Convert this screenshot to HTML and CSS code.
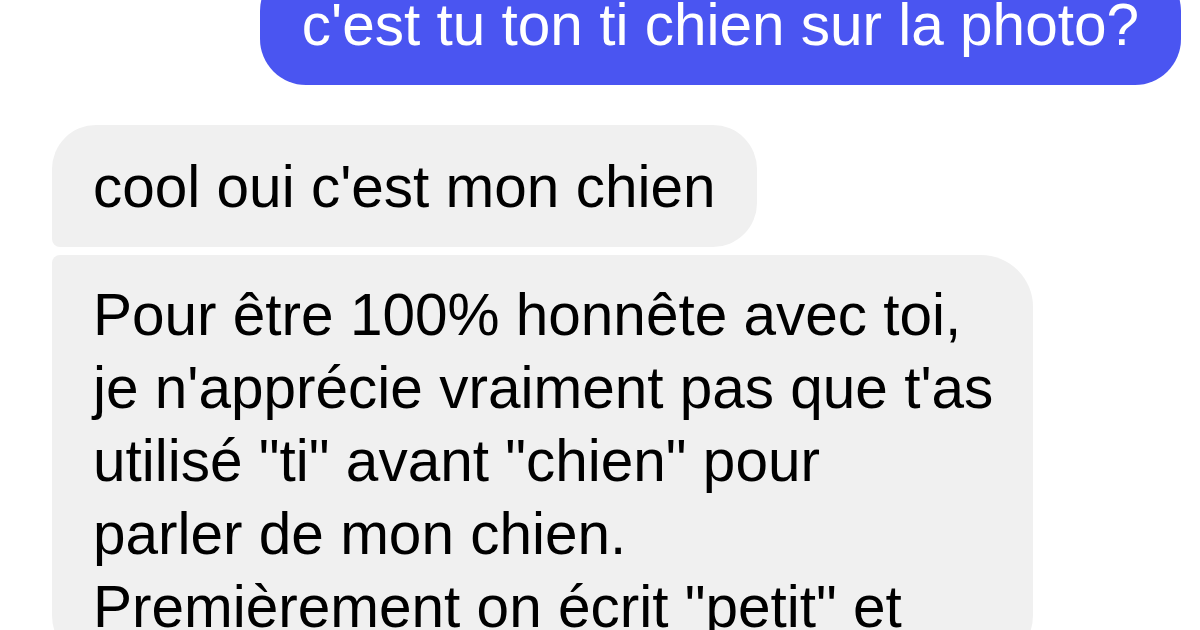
FILE: index.html
```html
<!DOCTYPE html>
<html lang="fr">
<head>
    <meta charset="UTF-8">
    <meta name="viewport" content="width=device-width, initial-scale=1.0">
    <title>Conversation</title>
    <link rel="stylesheet" href="styles.css">
</head>
<body>

<div class="thread">
    <div class="bubble sent">c'est tu ton ti chien sur la photo?</div>

    <div class="group">
        <div class="bubble received first">cool oui c'est mon chien</div>
        <div class="bubble received last long">
            Pour être 100% honnête avec toi,<br>
            je n'apprécie vraiment pas que t'as<br>
            utilisé "ti" avant "chien" pour<br>
            parler de mon chien.<br>
            Premièrement on écrit "petit" et
        </div>
    </div>
</div>

</body>
</html>
```

FILE: styles.css
```css
* {
    box-sizing: border-box;
    margin: 0;
    padding: 0;
}

body, html {
    height: 100%;
    overflow: hidden;
    background: #fff;
    font-family: "Liberation Sans", Arial, sans-serif;
}

.thread {
    display: flex;
    flex-direction: column;
    padding: 0 19px 0 52px;
}

.bubble {
    font-size: 58.5px;
    line-height: 72px;
    white-space: nowrap;
}

/* outgoing message, scrolled partly off the top */
.sent {
    align-self: flex-end;
    margin-top: -35px;
    padding: 24px 42px;
    background: #4a55f1;
    color: #fff;
    border-radius: 46px;
}

.group {
    display: flex;
    flex-direction: column;
    align-items: flex-start;
    gap: 8px;
    margin-top: 40px;
}

.received {
    background: #f0f0f0;
    color: #000;
    padding: 26px 41px 24px;
}

.received.first {
    border-radius: 44px 44px 44px 8px;
}

.received.last {
    border-radius: 8px 52px 52px 52px;
}

.long {
    width: 981px;
    padding-top: 23px;
    line-height: 73px;
}
```
